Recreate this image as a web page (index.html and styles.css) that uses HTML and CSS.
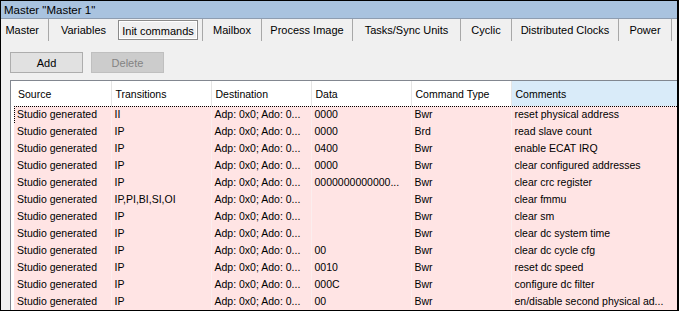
FILE: index.html
```html
<html lang="en">
  <head>
    <title>Master "Master 1"</title>
    <meta charset="utf-8">
    <meta name="viewport" content="width=device-width, initial-scale=1.0">
    <link rel="stylesheet" href="styles.css">
  </head>
  <body>
    <div class="window">
      <div class="titlebar">Master "Master 1"</div>

      <ul class="tabs">
        <li class="tab tab--first">Master</li>
        <li class="tab tab--vars">Variables</li>
        <li class="tab tab--active">Init commands</li>
        <li class="tab tab--mail">Mailbox</li>
        <li class="tab tab--pi">Process Image</li>
        <li class="tab tab--tasks">Tasks/Sync Units</li>
        <li class="tab tab--cyclic">Cyclic</li>
        <li class="tab tab--dc">Distributed Clocks</li>
        <li class="tab tab--power">Power</li>
      </ul>

      <div class="toolbar">
        <button class="btn">Add</button>
        <button class="btn btn--disabled">Delete</button>
      </div>

      <div class="grid">
        <table class="cmds">
          <colgroup>
            <col class="col-source">
            <col class="col-trans">
            <col class="col-dest">
            <col class="col-data">
            <col class="col-type">
            <col class="col-comment">
          </colgroup>
          <thead>
            <tr>
              <th>Source</th>
              <th>Transitions</th>
              <th>Destination</th>
              <th>Data</th>
              <th>Command Type</th>
              <th class="sorted">Comments</th>
            </tr>
          </thead>
          <tbody>
            <tr class="focused"><td>Studio generated</td><td>II</td><td>Adp: 0x0; Ado: 0...</td><td>0000</td><td>Bwr</td><td>reset physical address</td></tr>
            <tr><td>Studio generated</td><td>IP</td><td>Adp: 0x0; Ado: 0...</td><td>0000</td><td>Brd</td><td>read slave count</td></tr>
            <tr><td>Studio generated</td><td>IP</td><td>Adp: 0x0; Ado: 0...</td><td>0400</td><td>Bwr</td><td>enable ECAT IRQ</td></tr>
            <tr><td>Studio generated</td><td>IP</td><td>Adp: 0x0; Ado: 0...</td><td>0000</td><td>Bwr</td><td>clear configured addresses</td></tr>
            <tr><td>Studio generated</td><td>IP</td><td>Adp: 0x0; Ado: 0...</td><td>0000000000000...</td><td>Bwr</td><td>clear crc register</td></tr>
            <tr><td>Studio generated</td><td>IP,PI,BI,SI,OI</td><td>Adp: 0x0; Ado: 0...</td><td></td><td>Bwr</td><td>clear fmmu</td></tr>
            <tr><td>Studio generated</td><td>IP</td><td>Adp: 0x0; Ado: 0...</td><td></td><td>Bwr</td><td>clear sm</td></tr>
            <tr><td>Studio generated</td><td>IP</td><td>Adp: 0x0; Ado: 0...</td><td></td><td>Bwr</td><td>clear dc system time</td></tr>
            <tr><td>Studio generated</td><td>IP</td><td>Adp: 0x0; Ado: 0...</td><td>00</td><td>Bwr</td><td>clear dc cycle cfg</td></tr>
            <tr><td>Studio generated</td><td>IP</td><td>Adp: 0x0; Ado: 0...</td><td>0010</td><td>Bwr</td><td>reset dc speed</td></tr>
            <tr><td>Studio generated</td><td>IP</td><td>Adp: 0x0; Ado: 0...</td><td>000C</td><td>Bwr</td><td>configure dc filter</td></tr>
            <tr><td>Studio generated</td><td>IP</td><td>Adp: 0x0; Ado: 0...</td><td>00</td><td>Bwr</td><td>en/disable second physical ad...</td></tr>
          </tbody>
        </table>
      </div>
    </div>
  </body>
</html>
```

FILE: styles.css
```css
:root {
  --face: #f0f0f0;
  --row: #ffe4e4;
}

html, body {
  margin: 0;
  padding: 0;
}

body {
  width: 679px;
  height: 311px;
  font-family: "Liberation Sans", Arial, sans-serif;
  font-size: 11px;
  color: #000;
}

.window {
  box-sizing: border-box;
  width: 679px;
  height: 311px;
  border: 1px solid #000;
  border-right-width: 2px;
  background-color: var(--face);
  display: flex;
  flex-direction: column;
  overflow: hidden;
}

.titlebar {
  height: 17px;
  line-height: 19px;
  padding-left: 3px;
  font-size: 11.5px;
  background-color: #a9c3df;
  border-bottom: 1px solid #8e9db0;
}

/* tab strip */
.tabs {
  display: flex;
  margin: 0;
  padding: 0;
  list-style-type: none;
  height: 22px;
}

.tab {
  box-sizing: border-box;
  height: 22px;
  line-height: 22px;
  border-right: 1px solid #a8a8a8;
  text-align: center;
  white-space: nowrap;
}

.tab--first { width: 48px; padding-right: 9px; text-align: right; }
.tab--vars { width: 69px; border-right: none; }

.tab--active {
  width: 80px;
  height: 20px;
  line-height: 20px;
  margin: 1px 4px 0 0;
  border: 1px solid #8a8a8a;
  box-shadow: inset 1px 1px 0 #fff, inset -1px -1px 0 #fff;
}

.tab--mail { width: 60px; border-left: 1px solid #a8a8a8; }
.tab--pi { width: 91px; }
.tab--tasks { width: 108px; }
.tab--cyclic { width: 51px; }
.tab--dc { width: 107px; }
.tab--power { width: 53px; }

/* toolbar */
.toolbar {
  display: flex;
  gap: 8px;
  padding: 11px 0 7px 9px;
}

.btn {
  width: 73px;
  height: 21px;
  padding: 0;
  font-family: inherit;
  font-size: 11px;
  color: #000;
  background-color: #e1e1e1;
  border: 1px solid #adadad;
  border-radius: 0;
}

.btn--disabled {
  color: #838383;
  background-color: #cccccc;
  border-color: #bfbfbf;
}

/* command grid */
.grid {
  flex: 1;
  margin-left: 9px;
  border-top: 1px solid #828790;
  border-left: 1px solid #828790;
  background-color: #fff;
  padding-left: 3px;
  overflow: hidden;
}

.cmds {
  table-layout: fixed;
  border-collapse: collapse;
  width: 666px;
  font-size: 10.5px;
}

.col-source { width: 97px; }
.col-trans { width: 100px; }
.col-dest { width: 100px; }
.col-data { width: 100px; }
.col-type { width: 100px; }
.col-comment { width: 169px; }

.cmds th {
  height: 25px;
  padding: 0 0 0 4px;
  font-weight: normal;
  text-align: left;
  border-right: 1px solid #e5e5e5;
}

.cmds th.sorted {
  background-color: #d9ebf9;
  border-right: none;
}

.cmds td {
  height: 17px;
  padding: 0 0 0 3px;
  line-height: 17px;
  white-space: nowrap;
  overflow: hidden;
  background-color: var(--row);
  border-right: 1px solid #fbeeee;
}

.cmds td:last-child {
  border-right: none;
}

.focused td {
  background-image:
    repeating-linear-gradient(90deg, #000 0 1px, transparent 1px 2px);
  background-size: 100% 1px;
  background-repeat: no-repeat;
}

.focused td:first-child {
  background-image:
    repeating-linear-gradient(90deg, #000 0 1px, transparent 1px 2px),
    repeating-linear-gradient(180deg, #000 0 1px, transparent 1px 2px);
  background-size: 100% 1px, 1px 100%;
}
```
